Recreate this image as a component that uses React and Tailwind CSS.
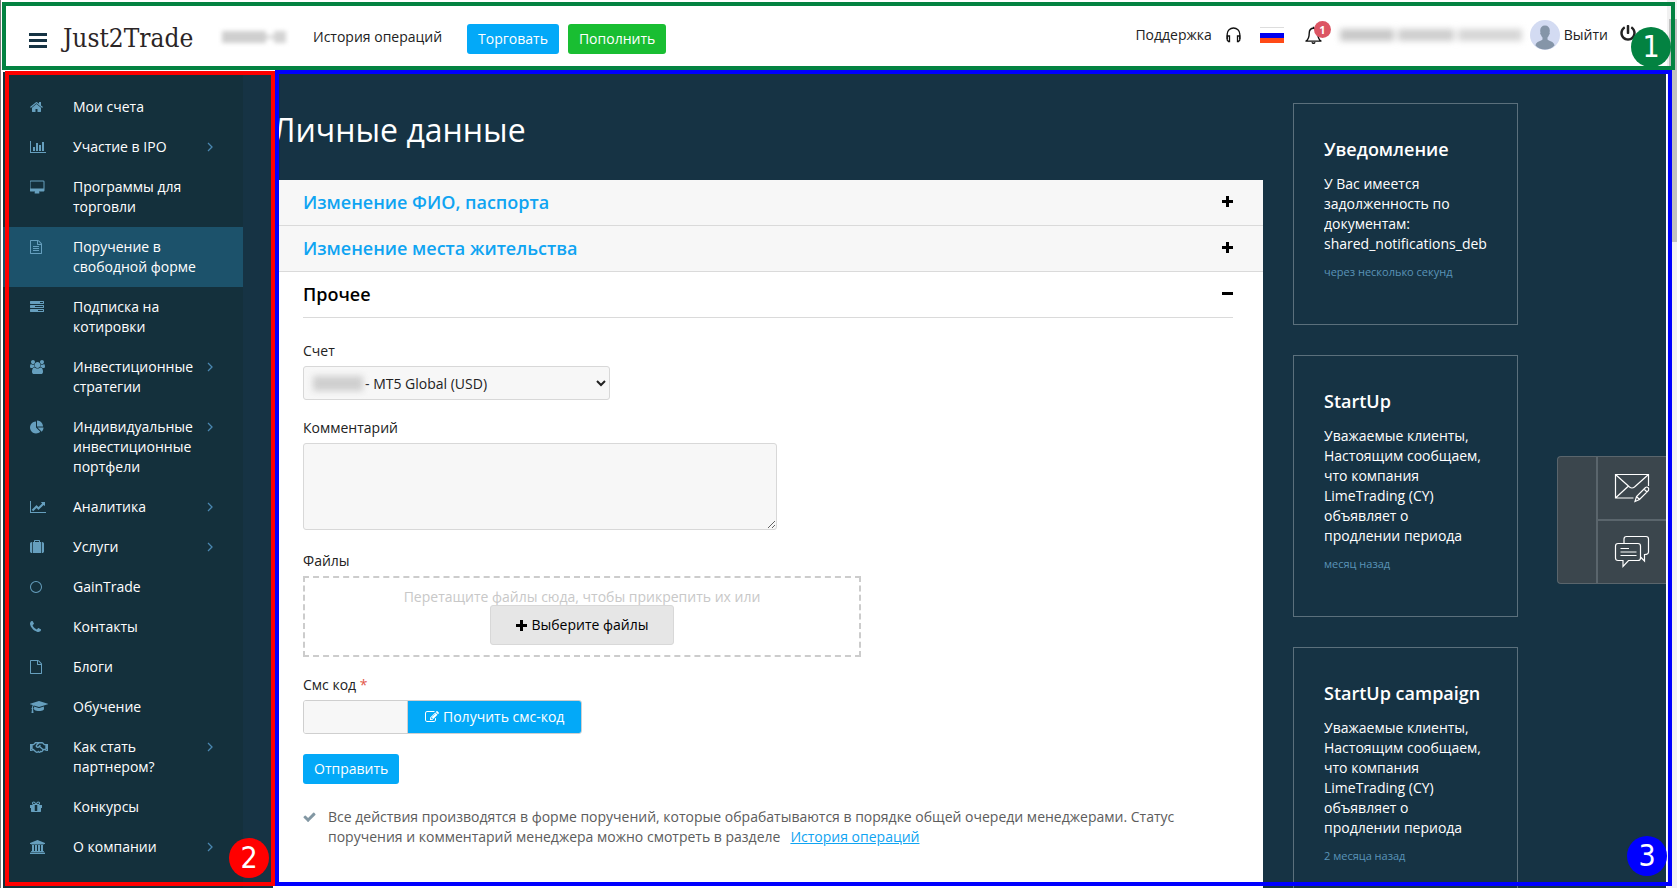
import { FaRegHandshake, FaPowerOff } from 'react-icons/fa'

const ICONS = {
  home: {
    box: '64 0 1664 1792',
    d: 'M1472 992v480q0 26-19 45t-45 19h-384v-384h-256v384h-384q-26 0-45-19t-19-45v-480q0-1 .5-3t.5-3l575-474 575 474q1 2 1 6zm223-69l-62 74q-8 9-21 11h-3q-13 0-21-7l-692-577-692 577q-12 8-24 7-13-2-21-11l-62-74q-8-10-7-23.5t11-21.5l719-599q32-26 76-26t76 26l244 204v-195q0-14 9-23t23-9h192q14 0 23 9t9 23v408l219 182q10 8 11 21.5t-7 23.5z',
  },
  bars: {
    box: '0 0 2048 1792',
    d: 'M640 896v512h-256v-512h256zm384-512v1024h-256v-1024h256zm1024 1152v128h-2048v-1536h128v1408h1920zm-640-896v768h-256v-768h256zm384-384v1152h-256v-1152h256z',
  },
  desktop: {
    box: '0 -64 1856 1792',
    d: 'M1728 992v-832q0-13-9.5-22.5t-22.5-9.5h-1600q-13 0-22.5 9.5t-9.5 22.5v832q0 13 9.5 22.5t22.5 9.5h1600q13 0 22.5-9.5t9.5-22.5zm128-832v1088q0 66-47 113t-113 47h-544q0 37 16 77.5t32 71 16 43.5q0 26-19 45t-45 19h-512q-26 0-45-19t-19-45q0-14 16-44t32-70 16-78h-544q-66 0-113-47t-47-113v-1088q0-66 47-113t113-47h1600q66 0 113 47t47 113z',
  },
  fileText: {
    box: '128 0 1536 1792',
    d: 'M1596 380q28 28 48 76t20 88v1152q0 40-28 68t-68 28h-1344q-40 0-68-28t-28-68v-1600q0-40 28-68t68-28h896q40 0 88 20t76 48zm-444-244v376h376q-10-29-22-41l-313-313q-12-12-41-22zm384 1528v-1024h-416q-40 0-68-28t-28-68v-416h-768v1536h1280zm-1024-864q0-14 9-23t23-9h704q14 0 23 9t9 23v64q0 14-9 23t-23 9h-704q-14 0-23-9t-9-23v-64zm736 224q14 0 23 9t9 23v64q0 14-9 23t-23 9h-704q-14 0-23-9t-9-23v-64q0-14 9-23t23-9h704zm0 256q14 0 23 9t9 23v64q0 14-9 23t-23 9h-704q-14 0-23-9t-9-23v-64q0-14 9-23t23-9h704z',
  },
  tasks: {
    box: '0 0 1792 1792',
    d: 'M1024 1408h640v-128h-640v128zm-384-512h1024v-128h-1024v128zm640-512h384v-128h-384v128zm512 832v256q0 26-19 45t-45 19h-1664q-26 0-45-19t-19-45v-256q0-26 19-45t45-19h1664q26 0 45 19t19 45zm0-512v256q0 26-19 45t-45 19h-1664q-26 0-45-19t-19-45v-256q0-26 19-45t45-19h1664q26 0 45 19t19 45zm0-512v256q0 26-19 45t-45 19h-1664q-26 0-45-19t-19-45v-256q0-26 19-45t45-19h1664q26 0 45 19t19 45z',
  },
  users: {
    box: '0 0 1920 1792',
    d: 'M593 896q-162 5-265 128h-134q-82 0-138-40.5t-56-118.5q0-353 124-353 6 0 43.5 21t97.5 42.5 119 21.5q67 0 133-23-5 37-5 66 0 139 81 256zm1071 637q0 120-73 189.5t-194 69.5h-874q-121 0-194-69.5t-73-189.5q0-53 3.5-103.5t14-109 26.5-108.5 43-97.5 62-81 85.5-53.5 111.5-20q10 0 43 21.5t73 48 107 48 135 21.5 135-21.5 107-48 73-48 43-21.5q61 0 111.5 20t85.5 53.5 62 81 43 97.5 26.5 108.5 14 109 3.5 103.5zm-1024-1277q0 106-75 181t-181 75-181-75-75-181 75-181 181-75 181 75 75 181zm704 384q0 159-112.5 271.5t-271.5 112.5-271.5-112.5-112.5-271.5 112.5-271.5 271.5-112.5 271.5 112.5 112.5 271.5zm576 225q0 78-56 118.5t-138 40.5h-134q-103-123-265-128 81-117 81-256 0-29-5-66 66 23 133 23 59 0 119-21.5t97.5-42.5 43.5-21q124 0 124 353zm-128-609q0 106-75 181t-181 75-181-75-75-181 75-181 181-75 181 75 75 181z',
  },
  pie: {
    box: '0 -64 1728 1792',
    d: 'M768 890l546 546q-106 108-247.5 168t-298.5 60q-209 0-385.5-103t-279.5-279.5-103-385.5 103-385.5 279.5-279.5 385.5-103v762zm187 6h773q0 157-60 298.5t-168 247.5zm709-128h-768v-768q209 0 385.5 103t279.5 279.5 103 385.5z',
  },
  line: {
    box: '0 0 2048 1792',
    d: 'M2048 1536v128h-2048v-1536h128v1408h1920zm-128-1248v435q0 21-19.5 29.5t-35.5-7.5l-121-121-633 633q-10 10-23 10t-23-10l-233-233-416 416-192-192 585-585q10-10 23-10t23 10l233 233 464-464-121-121q-16-16-7.5-35.5t29.5-19.5h435q14 0 23 9t9 23z',
  },
  suitcase: {
    box: '0 0 1792 1792',
    d: 'M640 256h512v-128h-512v128zm-352 0v1408h-64q-92 0-158-66t-66-158v-960q0-92 66-158t158-66h64zm1120 0v1408h-1024v-1408h128v-160q0-40 28-68t68-28h576q40 0 68 28t28 68v160h128zm384 224v960q0 92-66 158t-158 66h-64v-1408h64q92 0 158 66t66 158z',
  },
  circle: {
    box: '0 0 1536 1792',
    d: 'M768 256a640 640 0 1 0 0 1280a640 640 0 1 0 0-1280zM768 128a768 768 0 1 1 0 1536a768 768 0 1 1 0-1536z',
  },
  phone: {
    box: '192 0 1408 1792',
    d: 'M1600 1240q0 27-10 70.5t-21 68.5q-21 50-122 106-94 51-186 51-27 0-52.5-3.5t-57.5-12.5-47.5-14.5-55.5-20.5-49-18q-98-35-175-83-128-79-264.5-215.5t-215.5-264.5q-48-77-83-175-3-9-18-49t-20.5-55.5-14.5-47.5-12.5-57.5-3.5-52.5q0-92 51-186 56-101 106-122 25-11 68.5-21t70.5-10q14 0 21 3 18 6 53 76 11 19 30 54t35 63.5 31 53.5q3 4 17.5 25t21.5 35.5 7 28.5q0 20-28.5 50t-62 55-62 53-28.5 46q0 9 5 22.5t8.5 20.5 14 24 11.5 19q76 137 174 235t235 174q2 1 19 11.5t24 14 20.5 8.5 22.5 5q18 0 46-28.5t53-62 55-62 50-28.5q14 0 28.5 7t35.5 21.5 25 17.5q25 15 53.5 31t63.5 35 54 30q70 35 76 53 3 7 3 21z',
  },
  file: {
    box: '128 0 1536 1792',
    d: 'M1596 380q28 28 48 76t20 88v1152q0 40-28 68t-68 28h-1344q-40 0-68-28t-28-68v-1600q0-40 28-68t68-28h896q40 0 88 20t76 48zm-444-244v376h376q-10-29-22-41l-313-313q-12-12-41-22zm384 1528v-1024h-416q-40 0-68-28t-28-68v-416h-768v1536h1280z',
  },
  cap: {
    box: '0 0 2304 1792',
    d: 'M1774 836l18 316q4 69-82 128t-235 93.5-323 34.5-323-34.5-235-93.5-82-128l18-316 574 181q22 7 48 7t48-7zm530-324q0 23-22 31l-1120 352q-4 1-10 1t-10-1l-652-206q-43 34-71 111.5t-34 178.5q63 36 63 109 0 69-58 107l58 433q2 14-8 25-9 11-24 11h-192q-15 0-24-11-10-11-8-25l58-433q-58-38-58-107 0-73 65-111 11-207 98-330l-333-104q-22-8-22-31t22-31l1120-352q4-1 10-1t10 1l1120 352q22 8 22 31z',
  },
  gift: {
    box: '128 0 1536 1792',
    d: 'M1056 1356v-716h-320v716q0 25 18 38.5t46 13.5h192q28 0 46-13.5t18-38.5zm-456-844h195l-126-161q-26-31-69-31-40 0-68 28t-28 68 28 68 68 28zm688-96q0-40-28-68t-68-28q-43 0-69 31l-125 161h194q40 0 68-28t28-68zm376 256v320q0 14-9 23t-23 9h-96v416q0 40-28 68t-68 28h-1088q-40 0-68-28t-28-68v-416h-96q-14 0-23-9t-9-23v-320q0-14 9-23t23-9h440q-93 0-158.5-65.5t-65.5-158.5 65.5-158.5 158.5-65.5q107 0 168 77l128 165 128-165q61-77 168-77 93 0 158.5 65.5t65.5 158.5-65.5 158.5-158.5 65.5h440q14 0 23 9t9 23z',
  },
  bank: {
    box: '0 0 1920 1792',
    d: 'M960 0l960 384v128h-128q0 26-20.5 45t-48.5 19h-1526q-28 0-48.5-19t-20.5-45h-128v-128zm-704 640h256v768h128v-768h256v768h128v-768h256v768h128v-768h256v768h59q28 0 48.5 19t20.5 45v64h-1664v-64q0-26 20.5-45t48.5-19h59v-768zm1595 960q28 0 48.5 19t20.5 45v128h-1920v-128q0-26 20.5-45t48.5-19h1782z',
  },
  edit: {
    box: '0 0 1792 1792',
    d: 'M888 1184l116-116-152-152-116 116v56h96v96h56zm440-720q-16-16-33 1l-350 350q-17 17-1 33t33-1l350-350q17-17 1-33zm80 594v190q0 119-84.5 203.5t-203.5 84.5h-832q-119 0-203.5-84.5t-84.5-203.5v-832q0-119 84.5-203.5t203.5-84.5h832q63 0 117 25 15 7 18 23 3 17-9 29l-49 49q-14 14-32 8-23-6-45-6h-832q-66 0-113 47t-47 113v832q0 66 47 113t113 47h832q66 0 113-47t47-113v-126q0-13 9-22l64-64q15-15 35-7t20 29zm-96-738l288 288-672 672h-288v-288zm444 132l-92 92-288-288 92-92q28-28 68-28t68 28l152 152q28 28 28 68t-28 68z',
  },
  check: {
    box: '64 0 1664 1792',
    d: 'M1671 566q0 40-28 68l-724 724-136 136q-28 28-68 28t-68-28l-136-136-362-362q-28-28-28-68t28-68l136-136q28-28 68-28t68 28l294 295 656-657q28-28 68-28t68 28l136 136q28 28 28 68z',
  },
}

const MENU = [
  { label: 'Мои счета', icon: 'home' },
  { label: 'Участие в IPO', icon: 'bars', sub: true },
  { label: 'Программы для торговли', icon: 'desktop' },
  { label: 'Поручение в свободной форме', icon: 'fileText', active: true },
  { label: 'Подписка на котировки', icon: 'tasks' },
  { label: 'Инвестиционные стратегии', icon: 'users', sub: true },
  { label: 'Индивидуальные инвестиционные портфели', icon: 'pie', sub: true },
  { label: 'Аналитика', icon: 'line', sub: true },
  { label: 'Услуги', icon: 'suitcase', sub: true },
  { label: 'GainTrade', icon: 'circle' },
  { label: 'Контакты', icon: 'phone' },
  { label: 'Блоги', icon: 'file' },
  { label: 'Обучение', icon: 'cap' },
  { label: 'Как стать партнером?', icon: 'handshake', sub: true },
  { label: 'Конкурсы', icon: 'gift' },
  { label: 'О компании', icon: 'bank', sub: true },
]

const STARTUP_TEXT = 'Уважаемые клиенты, Настоящим сообщаем, что компания LimeTrading (CY) объявляет о продлении периода'

const NEWS = [
  { title: 'Уведомление', text: 'У Вас имеется задолженность по документам: shared_notifications_deb', date: 'через несколько секунд' },
  { title: 'StartUp', text: STARTUP_TEXT, date: 'месяц назад' },
  { title: 'StartUp campaign', text: STARTUP_TEXT, date: '2 месяца назад' },
]

function Icon({ name }) {
  if (name === 'handshake') return <FaRegHandshake className="w-[18px] h-[15px]" />
  const icon = ICONS[name]
  return (
    <svg viewBox={icon.box} className="h-3.5 w-auto shrink-0" fill="currentColor" fillRule={name === 'circle' ? 'evenodd' : 'nonzero'} aria-hidden="true">
      <path d={icon.d} />
    </svg>
  )
}

function PlusMinus({ open }) {
  return (
    <svg viewBox="0 0 11 11" className="w-[11px] h-[11px] shrink-0" fill="#000" aria-hidden="true">
      <path d="M0 4h11v3H0z" />
      {!open && <path d="M4 0h3v11H4z" />}
    </svg>
  )
}

function Header() {
  return (
    <header className="flex items-center h-18 bg-white pl-[26px] pr-[41px] text-sm text-[#222]">
      <button type="button" aria-label="Меню" className="flex flex-col gap-[3px] mt-2 mr-4">
        <span className="w-[18px] h-[3px] bg-[#163344]" />
        <span className="w-[18px] h-[3px] bg-[#163344]" />
        <span className="w-[18px] h-[3px] bg-[#163344]" />
      </button>
      <a href="#" className="w-[159px] mt-1 whitespace-nowrap text-[26px] leading-8 text-[#2b2526] font-['Roboto_Slab','DejaVu_Serif_Condensed','DejaVu_Serif',serif]">
        Just2Trade
      </a>
      <span className="flex items-center w-[64px] mt-0.5 mr-[27px] blur-[2px]">
        <span className="w-11 h-3 bg-[#cfcfcf]" />
        <span className="w-2 h-1 bg-[#dcdcdc]" />
        <span className="w-3 h-3 bg-[#d4d4d4]" />
      </span>
      <a href="#" className="mt-0.5 mr-[25px] whitespace-nowrap">История операций</a>
      <button type="button" className="h-[30px] px-[11px] mt-1.5 mr-[9px] rounded-[3px] bg-[#03a9f8] text-white">Торговать</button>
      <button type="button" className="h-[30px] px-[11px] mt-1.5 rounded-[3px] bg-[#19be32] text-white">Пополнить</button>

      <div className="flex items-center ml-auto mb-0.5">
        <a href="#" className="flex items-center gap-3.5">
          Поддержка
          <svg viewBox="0 0 15 16" className="w-[15px] h-4" fill="none" stroke="#111" strokeWidth="1.3" aria-hidden="true">
            <path d="M1.200 12V7a6.300 6 0 0 1 12.600 0v5" />
            <path d="M1.200 9h2.300v5.500H2.500L1.200 13zM13.800 9h-2.300v5.500h1L13.800 13z" />
          </svg>
        </a>
        <button type="button" aria-label="Русский" className="flex flex-col ml-[19px] w-6 h-[17px] border border-[#ddd] border-x-0 border-b-0">
          <span className="w-full flex-1 bg-white" />
          <span className="w-full flex-1 bg-[#0000f0]" />
          <span className="w-full flex-1 bg-[#ff4a17]" />
        </button>
        <button type="button" aria-label="Уведомления" className="relative ml-[21px] w-[17px] h-5">
          <svg viewBox="0 0 17 19" className="w-[17px] h-[19px]" fill="none" stroke="#111" strokeWidth="1.4" strokeLinejoin="round" aria-hidden="true">
            <path d="M8.500 2.200c-3 0-4.300 2.400-4.300 5.200 0 4.400-1.300 6.300-3.200 7.700h15c-1.900-1.400-3.200-3.300-3.200-7.700 0-2.800-1.300-5.200-4.300-5.200z" />
            <path d="M7 16.200a1.600 1.600 0 0 0 3 0M8.500 2.200V.8" />
          </svg>
          <span className="absolute -top-1 left-[9px] w-[17px] h-[17px] rounded-full bg-[#dc5563] text-white text-[11px] leading-[17px] font-bold text-center">1</span>
        </button>
        <span className="flex items-center gap-1 w-[182px] ml-[18px] mr-2 blur-[3px]">
          <span className="w-[54px] h-3 bg-[#c8c8c8]" />
          <span className="w-14 h-3 bg-[#cecece]" />
          <span className="flex-1 h-3 bg-[#d6d6d6]" />
        </span>
        <svg viewBox="0 0 30 30" className="w-[30px] h-[30px] mr-1" aria-hidden="true">
          <circle cx="15" cy="15" r="15" fill="#d3dbf2" />
          <path fill="#8595a8" d="M15 5.500c3 0 4.800 2 4.800 5 0 1-.1 1.600-.3 2.100.6.500.3 1.900-.5 2.300-.4 1.300-.9 2-1.500 2.600v2.100c1 1.400 6.500 1.900 7 5.800C22 28 19 29.500 15 29.500S8 28 5.500 25.400c.5-3.900 6-4.400 7-5.800v-2.100c-.6-.6-1.100-1.300-1.500-2.600-.8-.4-1.100-1.800-.5-2.300-.2-.5-.3-1.100-.3-2.100 0-3 1.800-5 4.800-5z" />
        </svg>
        <a href="#" className="flex items-center gap-3">
          Выйти
          <FaPowerOff className="w-4 h-4 mb-1" />
        </a>
      </div>
    </header>
  )
}

function Sidebar() {
  return (
    <nav className="w-60 shrink-0 pt-[15px] bg-[#14303c] text-sm leading-5 text-white">
      {MENU.map(item => (
        <a
          key={item.label}
          href="#"
          className={`flex py-2.5 pl-[27px] pr-[30px] ${item.active ? 'bg-[#1c526b]' : ''}`}
        >
          <span className="w-[43px] shrink-0 flex items-center h-5 text-[#669fbe]">
            <Icon name={item.icon} />
          </span>
          <span className="w-[127px] shrink-0">{item.label}</span>
          {item.sub && (
            <svg viewBox="0 0 6 10" className="ml-[7px] mt-[5px] w-1.5 h-2.5 shrink-0" fill="none" stroke="#4a86b0" strokeWidth="1.3" aria-hidden="true">
              <path d="M1 1l4 4-4 4" />
            </svg>
          )}
        </a>
      ))}
    </nav>
  )
}

function ClosedSection({ title }) {
  return (
    <button
      type="button"
      className="flex items-center justify-between w-full h-[46px] px-[30px] pb-0.5 bg-[#f7f7f7] border-b border-[#dadada] text-lg font-semibold text-[#0fa4f2]"
    >
      {title}
      <PlusMinus />
    </button>
  )
}

function OrderForm() {
  return (
    <form className="flex flex-col items-start pt-[23px] text-sm leading-5 text-[#222]" onSubmit={e => e.preventDefault()}>
      <label htmlFor="account" className="mb-[5px]">Счет</label>
      <div className="relative w-[307px] mb-[18px]">
        <select id="account" className="block w-full h-[34px] pl-[57px] rounded-[3px] border border-[#d8d8d8] bg-[#f7f7f7]">
          <option>- MT5 Global (USD)</option>
        </select>
        <span className="absolute left-2.5 top-2.5 w-[50px] h-[15px] bg-[#cfcfcf] blur-[3px]" />
      </div>

      <label htmlFor="comment" className="mb-[5px]">Комментарий</label>
      <textarea id="comment" className="w-[474px] max-w-full h-[87px] mb-[21px] rounded-[3px] border border-[#d8d8d8] bg-[#f7f7f7]" />

      <span className="mb-[5px]">Файлы</span>
      <div className="flex flex-col items-center w-[558px] max-w-full mb-[18px] pt-[11px] pb-2.5 border-2 border-dashed border-[#ccc]">
        <span className="text-[#c8c8c8] leading-4">Перетащите файлы сюда, чтобы прикрепить их или</span>
        <button type="button" className="flex items-center justify-center gap-[5px] h-10 w-[184px] rounded-[3px] border border-[#d8d8d8] bg-[#e6e6e6] text-black">
          <PlusMinus />
          Выберите файлы
        </button>
      </div>

      <label htmlFor="sms" className="mb-[5px]">
        Смс код <span className="text-[#e2574c]">*</span>
      </label>
      <div className="flex h-[34px] mb-5 rounded-[3px] border border-[#cfcfcf] overflow-hidden">
        <input id="sms" type="text" className="w-[104px] bg-[#f7f7f7] border-r border-[#cfcfcf]" />
        <button type="button" className="flex items-center gap-1 px-[17px] bg-[#03a9f8] text-white">
          <Icon name="edit" />
          Получить смс-код
        </button>
      </div>

      <button type="submit" className="h-[30px] px-[11px] rounded-[3px] bg-[#03a9f8] text-white">Отправить</button>

      <div className="flex mt-[23px] pr-10 text-[#5c5c5c]">
        <span className="flex items-center h-5 mr-3 text-[#8297a3]">
          <Icon name="check" />
        </span>
        <p>
          Все действия производятся в форме поручений, которые обрабатываются в порядке общей очереди менеджерами. Статус
          поручения и комментарий менеджера можно смотреть в разделе
          <a href="#" className="ml-2.5 text-[#0fa4f2] underline">История операций</a>
        </p>
      </div>
    </form>
  )
}

function NewsCard({ item }) {
  return (
    <article className="pt-[31px] pb-[42px] px-[30px] border border-[#5b707c] text-white">
      <h2 className="text-lg leading-7 font-semibold whitespace-nowrap">{item.title}</h2>
      <p className="mt-[11px] text-sm leading-5 overflow-hidden">{item.text}</p>
      <p className="mt-2 text-[11px] leading-5 text-[#5a93b8]">{item.date}</p>
    </article>
  )
}

function ContactWidget() {
  return (
    <div className="absolute right-[11px] top-[456px] flex w-[109px] h-32 rounded-l border border-r-0 border-[#5a656c] bg-[#3b464d] text-white">
      <div className="w-10 border-r-2 border-[#5a656c]" />
      <div className="flex flex-col flex-1 divide-y-2 divide-[#5a656c]">
        <button type="button" aria-label="Написать письмо" className="flex-1 flex items-center justify-center">
          <svg viewBox="0 0 36 30" className="w-9 h-[30px]" fill="none" stroke="currentColor" strokeWidth="1.2" aria-hidden="true">
            <path d="M19.500 25H1.500V1.500h33V13M1.500 1.500l14 12.500q2.500 2 5 0l14-12.500M1.500 25l13-12" />
            <path d="M21 28.500l1.500-5 9-9q1.300-1 2.500 0t.5 3l-9 9zM22.500 23.500l3 3M30 16l3 3" />
          </svg>
        </button>
        <button type="button" aria-label="Чат" className="flex-1 flex items-center justify-center">
          <svg viewBox="0 0 36 34" className="w-9 h-[34px]" fill="none" stroke="currentColor" strokeWidth="1.2" aria-hidden="true">
            <path d="M4 8.500h20q2.500 0 2.500 2.500v12q0 2.500-2.500 2.500H14.500L9 31.500v-6H4q-2.500 0-2.500-2.500V11q0-2.500 2.500-2.500z" />
            <path d="M10 8.500V4q0-2.500 2.500-2.500H32q2.500 0 2.500 2.500v13q0 2.500-4 2.500v6.500l-4-4" />
            <path d="M6.500 13.500H15M6.500 17h16M6.500 20.500h16" />
          </svg>
        </button>
      </div>
    </div>
  )
}

function Scrollbar() {
  return (
    <div className="absolute right-0 inset-y-0 w-[11px] pt-[19px] pl-0.5 bg-[#f1f1f1] border-l border-white">
      <div className="h-[223px] bg-[#c1c1c1]" />
    </div>
  )
}

const BADGE = "absolute w-10 h-10 rounded-full text-white text-[30px] leading-10 text-center font-['DejaVu_Sans_Condensed','DejaVu_Sans',sans-serif]"

// numbered frames around header, menu and content
function Frames() {
  return (
    <div className="absolute inset-0 pointer-events-none">
      <div className="absolute left-px right-0.5 top-0.5 h-[68px] border-4 border-[#038241]">
        <span className={`${BADGE} right-0 bottom-[-1px] bg-[#038241]`}>1</span>
      </div>
      <div className="absolute left-1 top-[71px] bottom-0.5 w-[270px] border-4 border-[#f00]">
        <span className={`${BADGE} right-0.5 bottom-1 bg-[#f00]`}>2</span>
      </div>
      <div className="absolute left-[274px] right-[5px] top-[70px] bottom-0.5 border-4 border-[#00f]">
        <span className={`${BADGE} right-px bottom-1.5 bg-[#00f]`}>3</span>
      </div>
    </div>
  )
}

export default function App() {
  return (
    <div className="relative h-screen overflow-hidden flex flex-col bg-white border-l border-[#777] pl-0.5 font-['Open_Sans','Noto_Sans',sans-serif]">
      <Header />
      <div className="flex flex-1 min-h-0 bg-[#163344]">
        <Sidebar />
        <main className="flex-1 min-w-0 flex flex-col ml-[30px]">
          <h1 className="pt-9 pb-7 text-[32px] leading-11 text-white">Личные данные</h1>
          <section className="flex-1 bg-white">
            <ClosedSection title="Изменение ФИО, паспорта" />
            <ClosedSection title="Изменение места жительства" />
            <div className="px-[30px]">
              <button type="button" className="flex items-center justify-between w-full h-[46px] pb-0.5 border-b border-[#dadada] text-lg font-semibold text-black">
                Прочее
                <PlusMinus open />
              </button>
              <OrderForm />
            </div>
          </section>
        </main>
        <aside className="w-[225px] shrink-0 ml-[30px] mr-[159px] pt-[31px] flex flex-col gap-[30px]">
          {NEWS.map(item => (
            <NewsCard key={item.title} item={item} />
          ))}
        </aside>
      </div>
      <Scrollbar />
      <ContactWidget />
      <Frames />
    </div>
  )
}
